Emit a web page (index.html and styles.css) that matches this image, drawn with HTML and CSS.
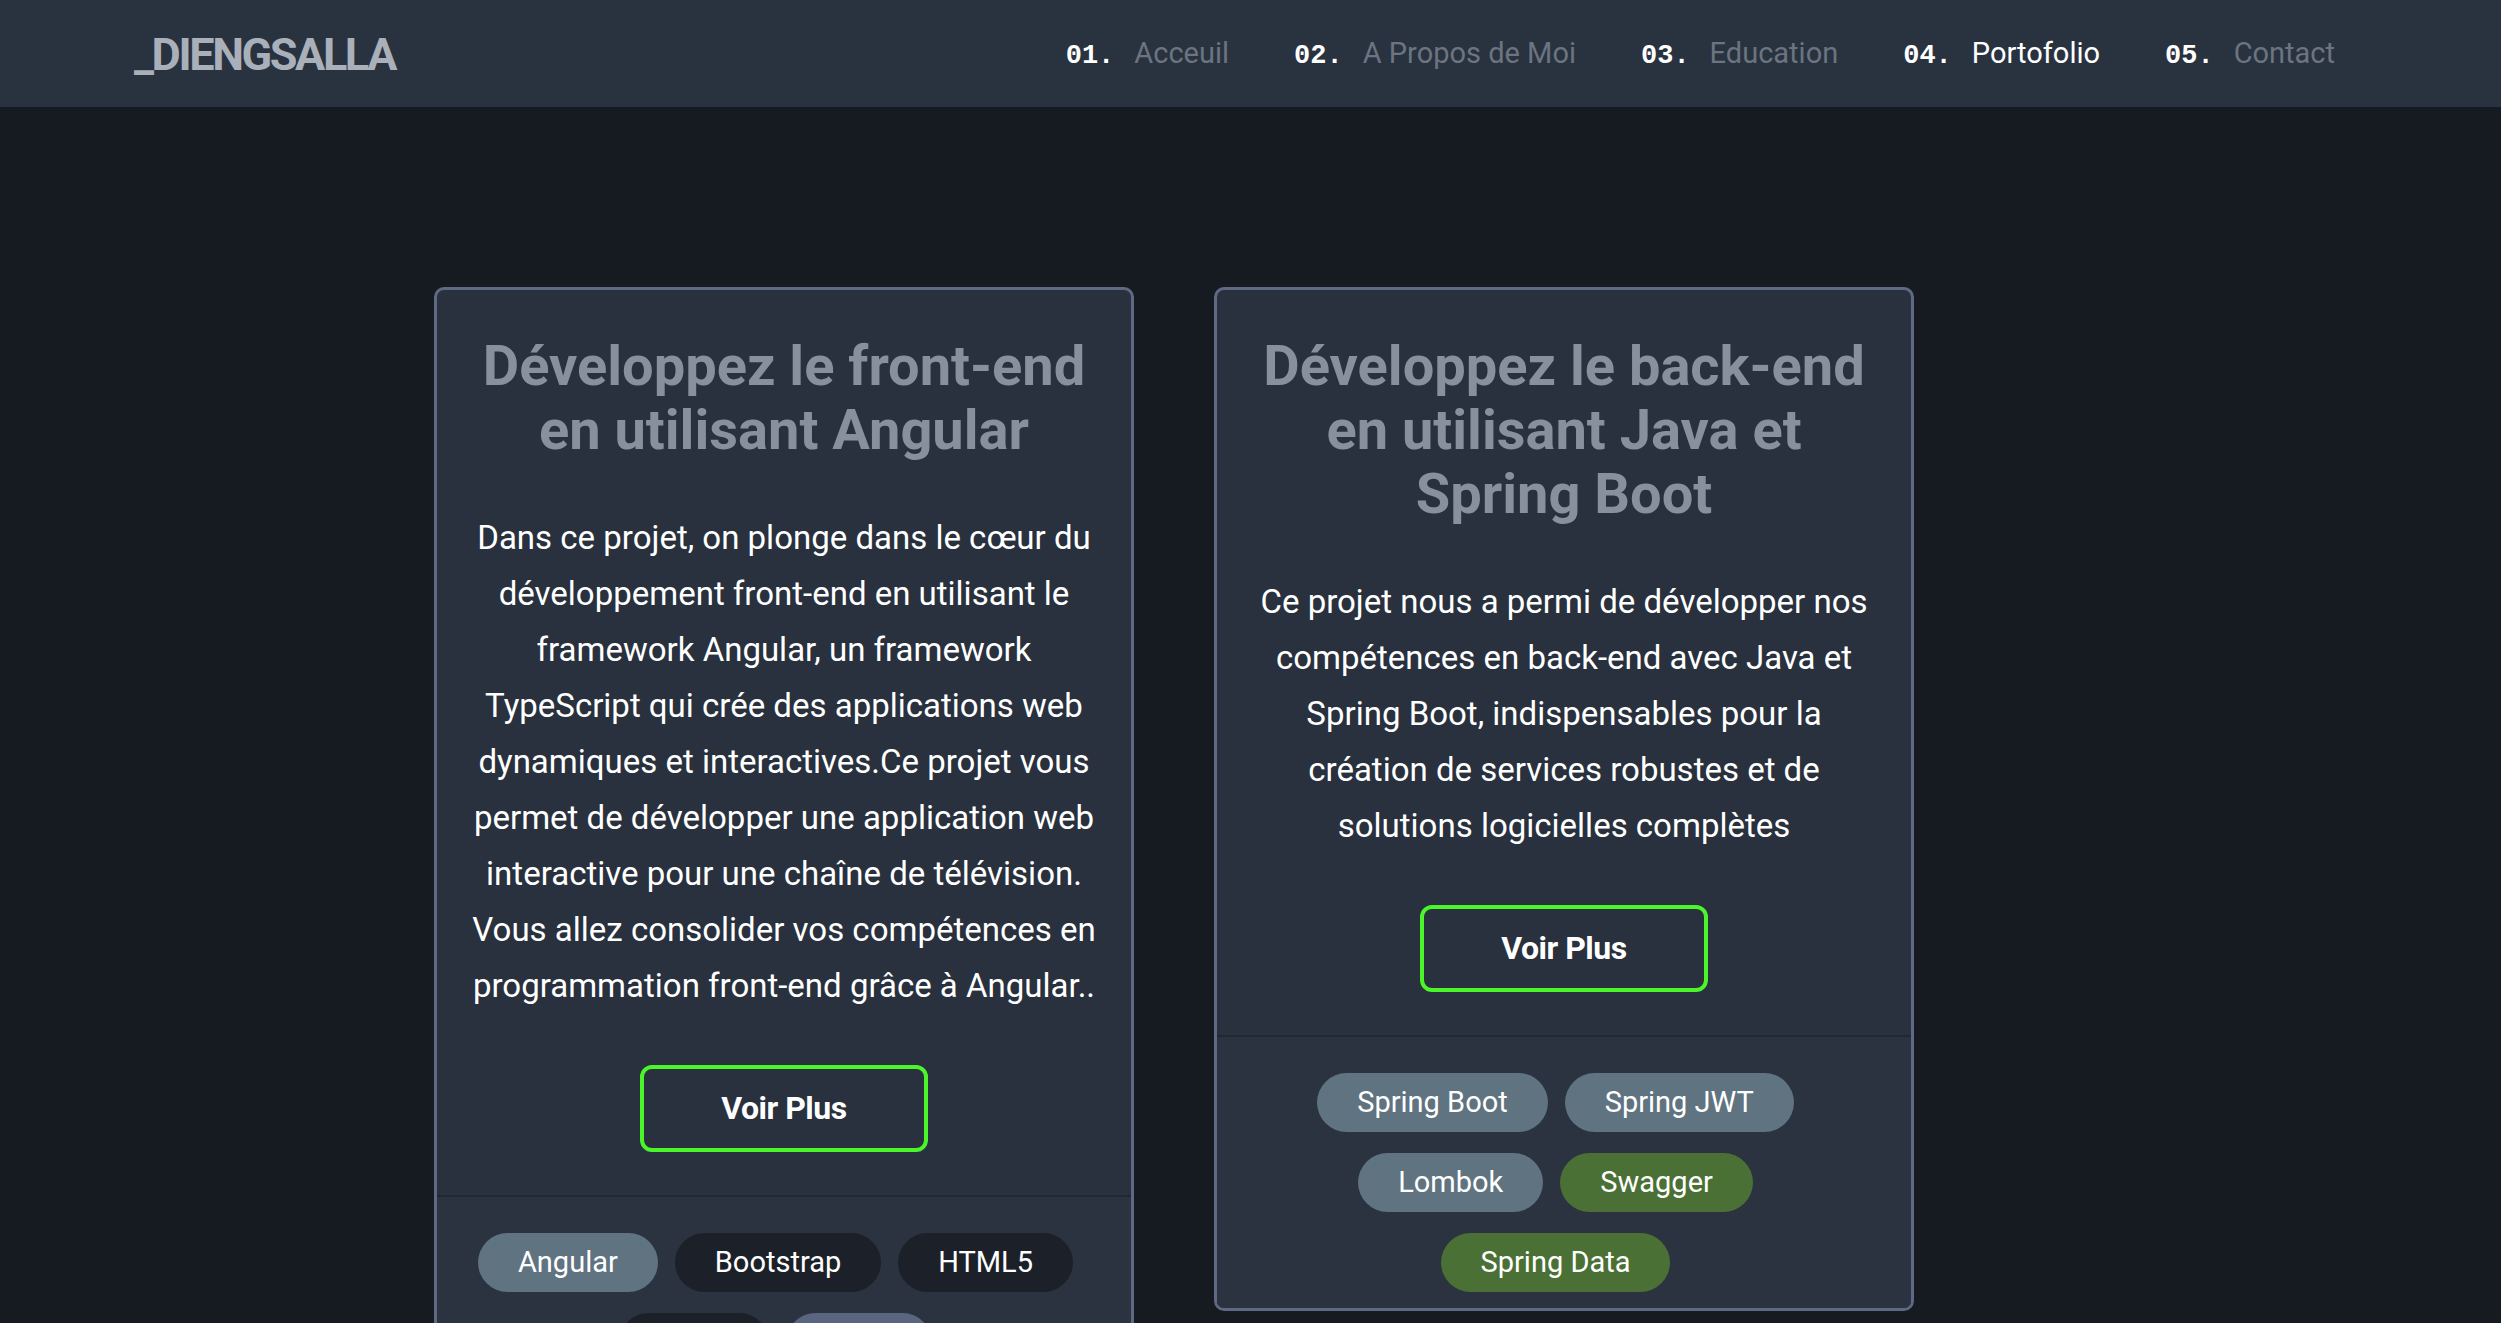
FILE: index.html
```html
<!DOCTYPE html>
<html lang="fr">
<head>
<meta charset="utf-8">
<title>Portofolio</title>
<link rel="stylesheet" href="styles.css">
</head>
<body>
<header class="navbar">
  <div class="brand">_DIENGSALLA</div>
  <nav class="nav">
    <a class="nav-link" href="#"><span class="num">01.</span>Acceuil</a>
    <a class="nav-link" href="#"><span class="num">02.</span>A Propos de Moi</a>
    <a class="nav-link" href="#"><span class="num">03.</span>Education</a>
    <a class="nav-link active" href="#"><span class="num">04.</span>Portofolio</a>
    <a class="nav-link" href="#"><span class="num">05.</span>Contact</a>
  </nav>
</header>
<main class="projects">
  <article class="card">
    <div class="card-body">
      <h2 class="card-title">Développez le front-end en utilisant Angular</h2>
      <p class="card-text">Dans ce projet, on plonge dans le cœur du développement front-end en utilisant le framework Angular, un framework TypeScript qui crée des applications web dynamiques et interactives.Ce projet vous permet de développer une application web interactive pour une chaîne de télévision. Vous allez consolider vos compétences en programmation front-end grâce à Angular..</p>
      <a class="btn" href="#">Voir Plus</a>
    </div>
    <div class="card-footer">
      <span class="tag tag-slate">Angular</span>
      <span class="tag tag-dark">Bootstrap</span>
      <span class="tag tag-dark">HTML5</span>
      <span class="tag tag-dark">CSS3</span>
      <span class="tag tag-indigo">RxJS</span>
    </div>
  </article>
  <article class="card">
    <div class="card-body">
      <h2 class="card-title">Développez le back-end en utilisant Java et Spring Boot</h2>
      <p class="card-text">Ce projet nous a permi de développer nos compétences en back-end avec Java et Spring Boot, indispensables pour la création de services robustes et de solutions logicielles complètes</p>
      <a class="btn" href="#">Voir Plus</a>
    </div>
    <div class="card-footer">
      <span class="tag tag-slate">Spring Boot</span>
      <span class="tag tag-slate">Spring JWT</span>
      <span class="tag tag-slate">Lombok</span>
      <span class="tag tag-green">Swagger</span>
      <span class="tag tag-green">Spring Data</span>
    </div>
  </article>
</main>
</body>
</html>
```
FILE: styles.css
```css
html, body {
  margin: 0;
  padding: 0;
}

body {
  background: #161a21;
  font-family: Roboto, "Liberation Sans", sans-serif;
  overflow: hidden;
}

.navbar {
  height: 107px;
  box-sizing: border-box;
  background: #29323f;
  display: flex;
  align-items: center;
  justify-content: space-between;
  padding: 0 166px 0 134px;
}

.brand {
  font-weight: 700;
  font-size: 45px;
  letter-spacing: -2.4px;
  color: #a9b0ba;
  padding-top: 2px;
}

.nav {
  display: flex;
  gap: 65px;
}

.nav-link {
  font-size: 29px;
  color: #6b7480;
  text-decoration: none;
  white-space: nowrap;
}

.nav-link.active {
  color: #ffffff;
}

.num {
  font-family: "Liberation Mono", "DejaVu Sans Mono", monospace;
  font-weight: 700;
  font-size: 27px;
  color: #ffffff;
  margin-right: 20px;
}

.projects {
  display: flex;
  align-items: flex-start;
  gap: 80px;
  padding: 180px 0 0 434px;
}

.card {
  width: 700px;
  flex: none;
  box-sizing: border-box;
  border: 3px solid #5e6a84;
  border-radius: 10px;
  background: #28313d;
  overflow: hidden;
}

.card-body {
  padding: 44px 30px 43px;
  text-align: center;
}

.card-title {
  margin: 0 0 48px;
  font-weight: 700;
  font-size: 56px;
  line-height: 64px;
  color: #87909c;
}

.card-text {
  margin: 0 0 51px;
  font-size: 33px;
  line-height: 56px;
  color: #ffffff;
}

.btn {
  display: inline-block;
  width: 288px;
  height: 87px;
  box-sizing: border-box;
  border: 4px solid #4cf52a;
  border-radius: 12px;
  font-weight: 700;
  font-size: 32px;
  line-height: 79px;
  color: #ffffff;
  text-decoration: none;
  letter-spacing: -0.5px;
}

.card-footer {
  border-top: 2px solid #222831;
  background: #2b3240;
  padding: 36px 40px 16px;
  display: flex;
  flex-wrap: wrap;
  justify-content: center;
  row-gap: 21px;
}

.tag {
  display: inline-block;
  margin-right: 17px;
  padding: 12px 40px;
  border-radius: 30px;
  font-size: 29px;
  line-height: 35px;
  color: #ffffff;
}

.tag-slate { background: #5f7380; }
.tag-dark { background: #1c2129; }
.tag-green { background: #4a7035; }
.tag-indigo { background: #5a6580; }
```
